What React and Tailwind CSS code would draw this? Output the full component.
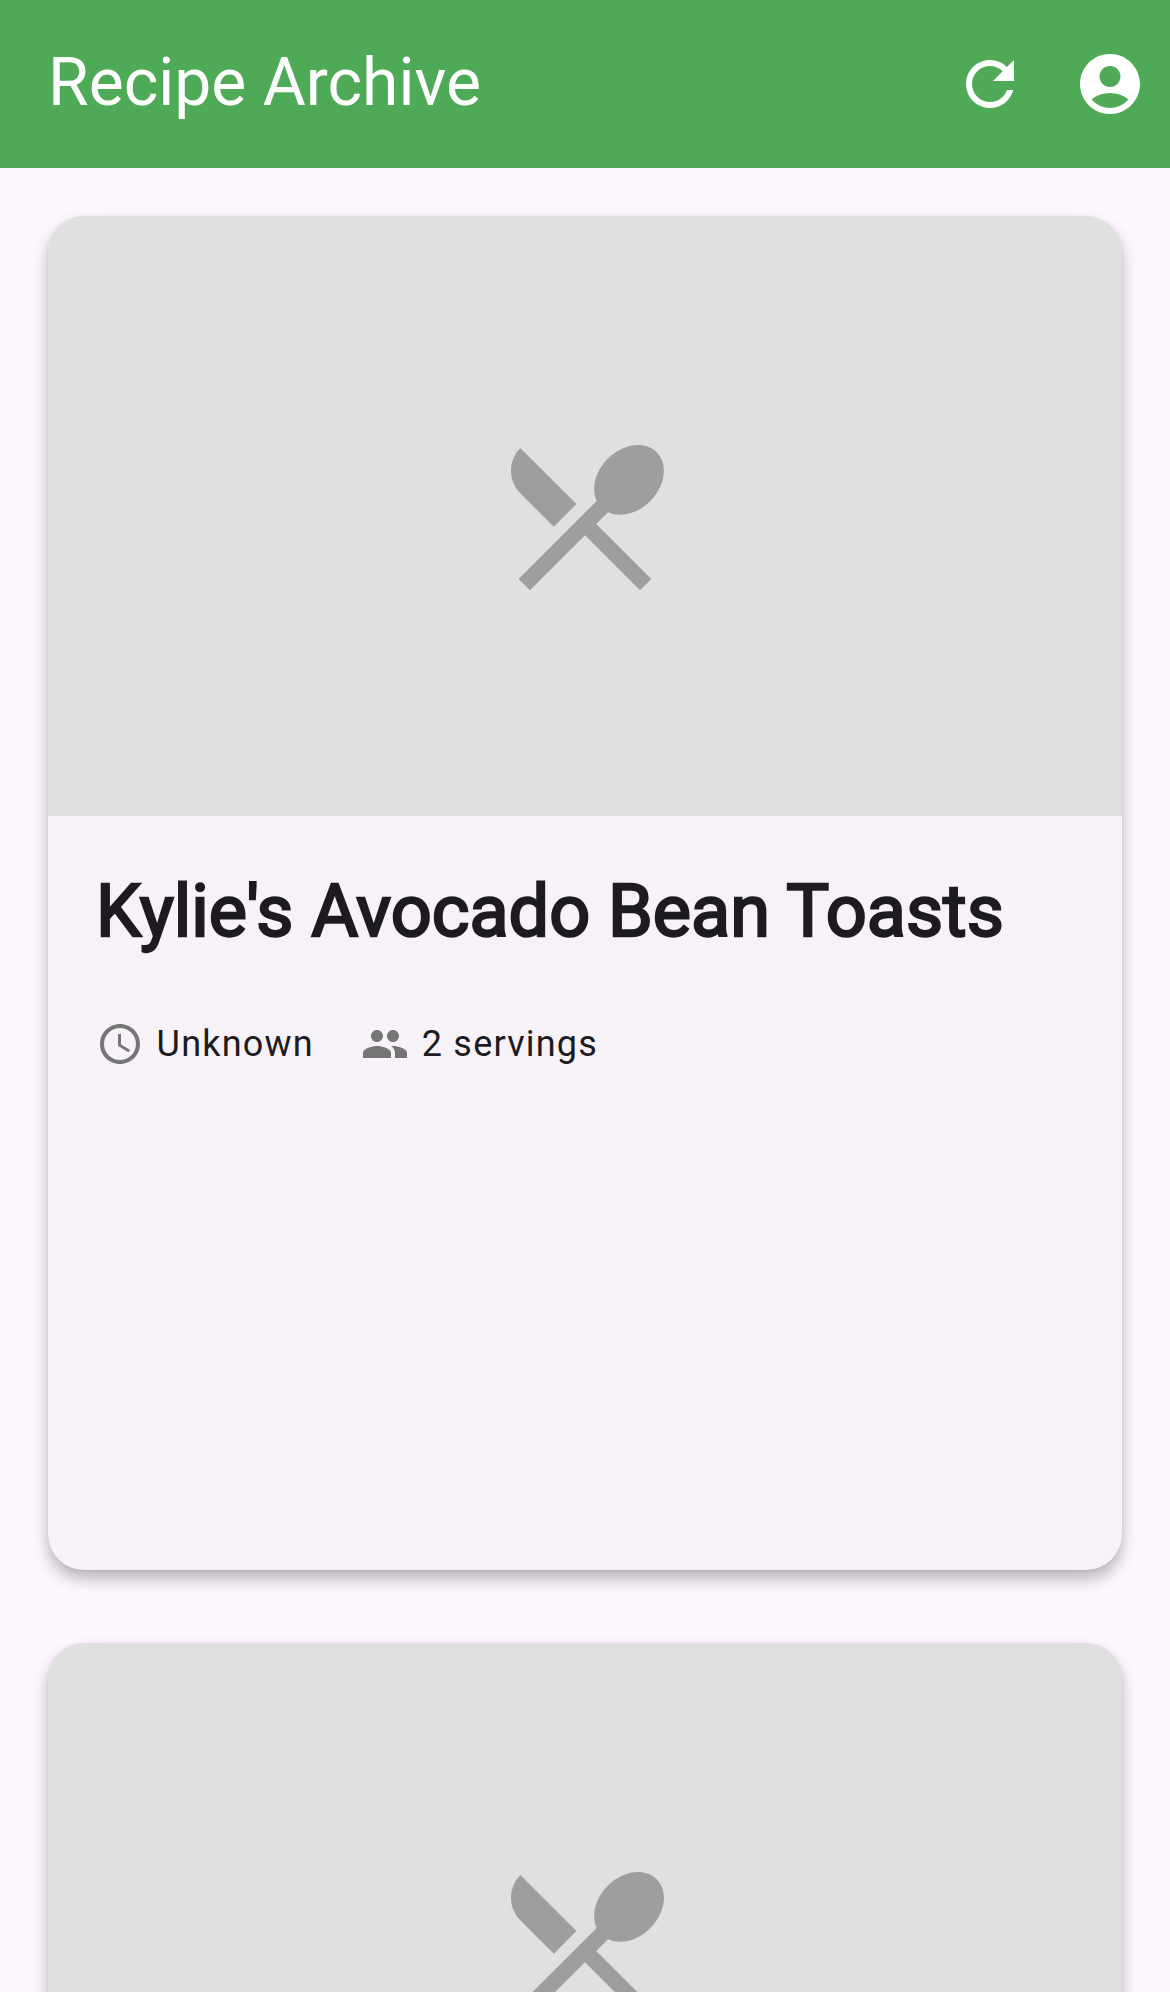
import { MdRefresh, MdAccountCircle, MdRestaurantMenu, MdAccessTime, MdPeople } from "react-icons/md";

function RecipeCard({ title, time, servings }) {
  return (
    <article className="h-[1354.4px] shrink-0 overflow-hidden rounded-[36px] bg-[#f6f2f8] shadow-[0_9px_16px_rgba(0,0,0,0.28),0_0_3px_rgba(0,0,0,0.06)]">
      <div className="flex h-[600px] items-center justify-center bg-[#e0e0e0]">
        <MdRestaurantMenu className="size-[192px] text-[#9e9e9e]" />
      </div>
      <div className="p-12">
        <h2 className="h-[96px] whitespace-nowrap text-[72px] leading-[96px] font-normal tracking-[-0.02px] text-[#1d1b20] [-webkit-text-stroke:2.4px_#1d1b20]">{title}</h2>
        <div className="mt-[60px] flex h-12 items-center text-[36px] leading-[48px] tracking-[1.2px] text-[#1d1b20]">
          <MdAccessTime className="size-12 text-[#757575]" />
          <span className="ml-[12.6px]">{time}</span>
          <MdPeople className="ml-[47.4px] size-12 text-[#757575]" />
          <span className="ml-[12.6px]">{servings}</span>
        </div>
      </div>
    </article>
  );
}

export default function App() {
  return (
    <div className="flex h-[1992px] w-[1170px] flex-col overflow-hidden bg-[#fef7ff] font-[Roboto,sans-serif]">
      <header className="flex h-[168px] shrink-0 items-center justify-between bg-[#4eaa56] pl-12 pr-6 text-white">
        <h1 className="pb-0.5 text-[66px] leading-[84px]">Recipe Archive</h1>
        <div className="flex items-center gap-12">
          <MdRefresh className="size-[72px]" />
          <MdAccountCircle className="size-[72px]" />
        </div>
      </header>
      <main className="flex flex-col gap-[72.2px] px-12 pt-12">
        <RecipeCard title="Kylie's Avocado Bean Toasts" time="Unknown" servings="2 servings" />
        <RecipeCard title="" time="" servings="" />
      </main>
    </div>
  );
}
